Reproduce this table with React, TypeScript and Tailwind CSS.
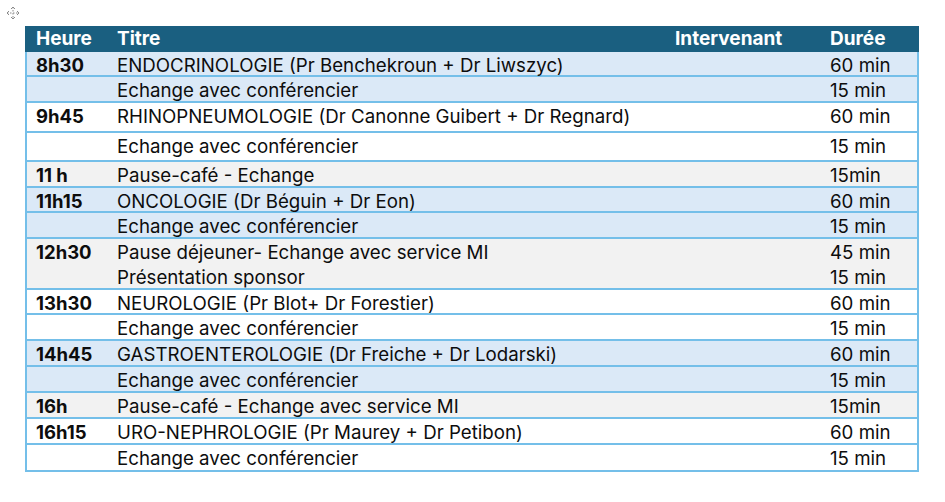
import React from "react";

type Row = {
  h: number;
  bg: string;
  time?: string;
  title: React.ReactNode;
  dur: React.ReactNode;
};

const BLUE = "bg-[#dbe9f7]";
const WHITE = "bg-white";
const GREY = "bg-[#f2f2f2]";

const rows: Row[] = [
  { h: 25, bg: BLUE, time: "8h30", title: "ENDOCRINOLOGIE (Pr Benchekroun + Dr Liwszyc)", dur: "60 min" },
  { h: 26, bg: BLUE, title: "Echange avec conférencier", dur: "15 min" },
  { h: 30, bg: WHITE, time: "9h45", title: "RHINOPNEUMOLOGIE (Dr Canonne Guibert + Dr Regnard)", dur: "60 min" },
  { h: 29, bg: WHITE, title: "Echange avec conférencier", dur: "15 min" },
  { h: 26, bg: GREY, time: "11 h", title: "Pause-café - Echange", dur: "15min" },
  { h: 25, bg: BLUE, time: "11h15", title: "ONCOLOGIE (Dr Béguin + Dr Eon)", dur: "60 min" },
  { h: 26, bg: BLUE, title: "Echange avec conférencier", dur: "15 min" },
  {
    h: 51,
    bg: GREY,
    time: "12h30",
    title: (
      <>
        <div>Pause déjeuner- Echange avec service MI</div>
        <div>Présentation sponsor</div>
      </>
    ),
    dur: (
      <>
        <div>45 min</div>
        <div>15 min</div>
      </>
    ),
  },
  { h: 25, bg: WHITE, time: "13h30", title: "NEUROLOGIE (Pr Blot+ Dr Forestier)", dur: "60 min" },
  { h: 26, bg: WHITE, title: "Echange avec conférencier", dur: "15 min" },
  { h: 26, bg: BLUE, time: "14h45", title: "GASTROENTEROLOGIE (Dr Freiche + Dr Lodarski)", dur: "60 min" },
  { h: 26, bg: BLUE, title: "Echange avec conférencier", dur: "15 min" },
  { h: 26, bg: GREY, time: "16h", title: "Pause-café - Echange avec service MI", dur: "15min" },
  { h: 26, bg: WHITE, time: "16h15", title: "URO-NEPHROLOGIE (Pr Maurey + Dr Petibon)", dur: "60 min" },
  { h: 25, bg: WHITE, title: "Echange avec conférencier", dur: "15 min" },
];

function MoveIcon() {
  return (
    <svg width="14" height="14" viewBox="0 0 14 14" fill="none" stroke="#8a8a8a" strokeWidth="1">
      <path d="M7 1v12M1 7h12" strokeDasharray="1.5 1.5" />
      <path d="M5 3l2-2 2 2M5 11l2 2 2-2M3 5L1 7l2 2M11 5l2 2-2 2" />
    </svg>
  );
}

export default function App() {
  return (
    <div
      className="w-[945px] h-[502px] bg-white relative text-[#0d0d0d]"
      style={{ fontFamily: "Inter, 'Liberation Sans', sans-serif" }}
    >
      <div className="absolute left-[6px] top-[6px]">
        <MoveIcon />
      </div>
      <div className="pt-[26px] pl-[25px]">
        <div className="w-[894px] border-l-2 border-r-2 border-b-2 border-[#74bfe9]">
          <div className="flex h-[26px] bg-[#1a5f80] text-white font-bold text-[19px] leading-[26px] -mx-[2px]">
            <div className="w-[87px] pl-[11px]">Heure</div>
            <div className="w-[558px] pl-[5px]">Titre</div>
            <div className="w-[155px] pl-[5px]">Intervenant</div>
            <div className="flex-1 pl-[5px]">Durée</div>
          </div>
          {rows.map((r, i) => (
            <div
              key={i}
              className={`flex ${r.bg} text-[18.7px] leading-[25px] ${i === rows.length - 1 ? "" : "border-b-2 border-[#74bfe9]"}`}
              style={{ height: r.h }}
            >
              <div className="w-[85px] pl-[9px] pt-[1px] font-bold text-[18.5px]">{r.time}</div>
              <div className="w-[558px] pl-[5px] pt-[1px]">{r.title}</div>
              <div className="w-[155px]" />
              <div className="flex-1 pl-[5px] pt-[1px]">{r.dur}</div>
            </div>
          ))}
        </div>
      </div>
    </div>
  );
}
